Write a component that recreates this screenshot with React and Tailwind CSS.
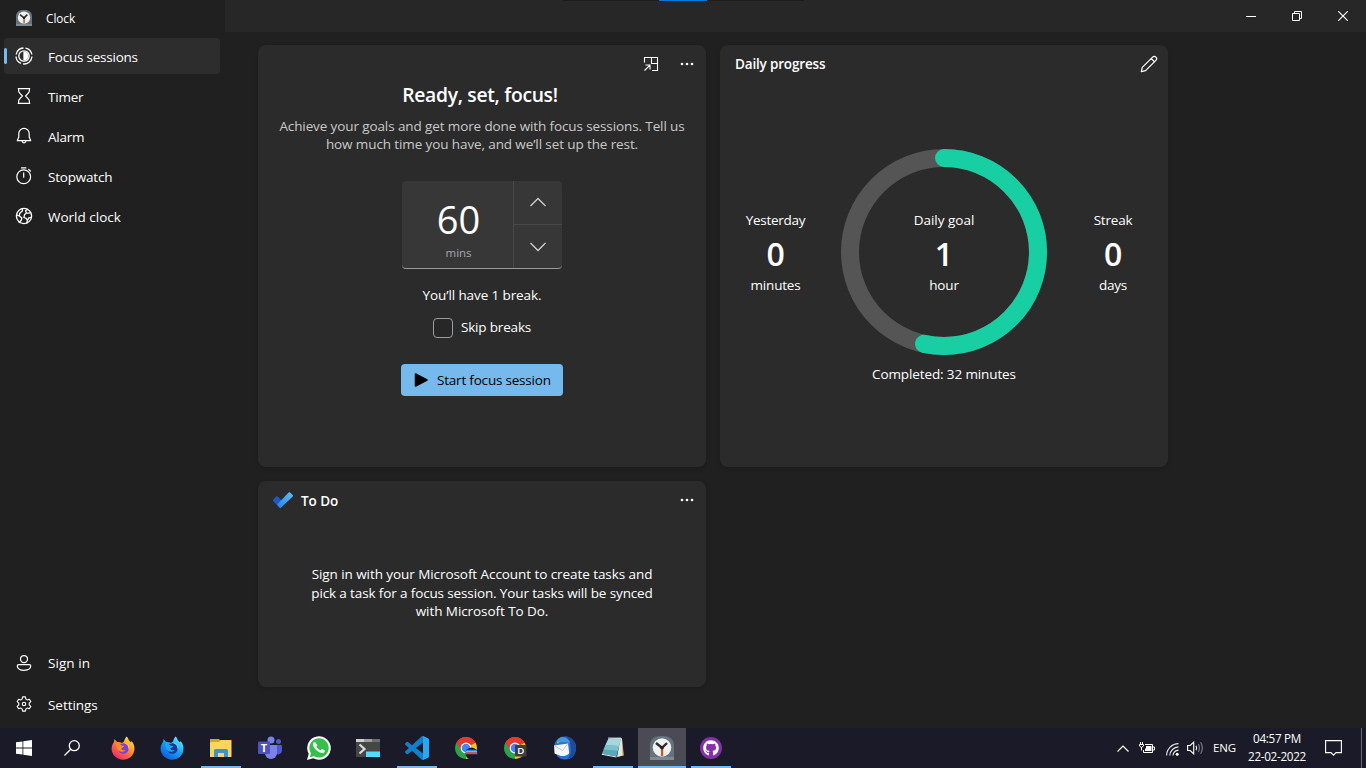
import React from "react";
import { FaGithub } from "react-icons/fa";

const line = {
  fill: "none",
  stroke: "currentColor",
  strokeWidth: 1.1,
  strokeLinecap: "round",
  strokeLinejoin: "round",
};

function ClockAppIcon({ size }) {
  return (
    <svg width={size} height={size} viewBox="0 0 24 24">
      <path d="M0 24V9.500C0 3.500 4.500 0 10 0h4c5.500 0 10 3.500 10 9.500V24z" fill="#66727c" />
      <path d="M0 21h24v3H0z" fill="#7d8a93" />
      <circle cx="12" cy="11.500" r="9.300" fill="#f1f1f1" />
      <path d="M11 12h2.200v8H11z" fill="#e2491c" />
      <path d="M6 7l6 4.800L17 7" fill="none" stroke="#2e2e2e" strokeWidth="2.400" />
      <circle cx="12" cy="11.800" r="1.800" fill="#222" />
    </svg>
  );
}

function FocusIcon() {
  return (
    <svg width="18" height="18" viewBox="0 0 18 18" {...line} strokeWidth="1.300">
      <path d="M10.500 1.150A8 8 0 0 1 16.850 7.500M17 9.500A8 8 0 0 1 8 16.950M6 16.400A8 8 0 0 1 1 9.500M1.150 7.500A8 8 0 0 1 8.500 1" strokeLinecap="butt" />
      <circle cx="9" cy="9" r="5.200" />
      <path d="M9 5.200A3.800 3.800 0 0 1 9 12.800z" fill="currentColor" />
    </svg>
  );
}

function TimerIcon() {
  return (
    <svg width="18" height="18" viewBox="0 0 18 18" {...line} strokeWidth="1.200">
      <path d="M3.300 1.600h11.400M3.300 16.400h11.400M3.600 1.600v2.200c0 1.200.5 1.800 1.300 2.500L7.400 9l-2.500 2.700c-.8.700-1.300 1.300-1.300 2.500v2.200M14.400 1.600v2.200c0 1.200-.5 1.800-1.300 2.500L10.600 9l2.500 2.700c.8.700 1.300 1.300 1.300 2.500v2.200" />
    </svg>
  );
}

function AlarmIcon() {
  return (
    <svg width="18" height="18" viewBox="0 0 18 18" {...line} strokeWidth="1.200">
      <path d="M9 1.300a5.200 5.200 0 0 0-5.200 5.200v3.600L2.300 13.600h13.400l-1.500-3.500V6.500A5.200 5.200 0 0 0 9 1.300z" />
      <path d="M7.100 14c.1 1.200.8 1.900 1.900 1.900s1.800-.7 1.900-1.900" />
    </svg>
  );
}

function StopwatchIcon() {
  return (
    <svg width="18" height="18" viewBox="0 0 18 18" {...line} strokeWidth="1.200">
      <circle cx="8.700" cy="9.700" r="6.900" />
      <path d="M8.700 5.800v4.400M6.500.9h4.400M13.700 2.500l1.700 1.500" />
    </svg>
  );
}

function WorldIcon() {
  return (
    <svg width="18" height="18" viewBox="0 0 18 18" {...line} strokeWidth="1.300">
      <circle cx="9" cy="9" r="7.600" />
      <path d="M7.300 1.700l.2 2.100-2.700 2.400L4.300 9 1.800 8M4.300 9l2.600 2-.7 2.300-2 2.200M12.500 2.500l-2 1.300.9 2.100-1.900 1.900-.6 2.700 2.300.8 1.200 2.200-.6 2.600M11.400 5.900l2.700.2 1.600-.6M12.400 13.500l1.400-2.600 2.500-.6" />
    </svg>
  );
}

function PersonIcon() {
  return (
    <svg width="18" height="18" viewBox="0 0 18 18" {...line} strokeWidth="1.250">
      <circle cx="9" cy="5" r="3.500" />
      <path d="M3.700 10.700h10.600c.8 0 1.400.6 1.400 1.400 0 2.700-2.900 4.200-6.700 4.200s-6.700-1.500-6.700-4.200c0-.8.6-1.400 1.400-1.400z" />
    </svg>
  );
}

function GearIcon() {
  return (
    <svg width="18" height="18" viewBox="0 0 18 18" {...line} strokeWidth="1.100" className="-translate-y-px">
      <path d="M7.600 1.900h2.800l.5 2.200 1.300.8 2.200-.7 1.400 2.400L14.200 8.200v1.600l1.600 1.600-1.400 2.400-2.200-.7-1.300.8-.5 2.200H7.600l-.5-2.200-1.300-.8-2.200.7-1.400-2.400 1.600-1.600V8.200L2.200 6.600l1.400-2.400 2.200.7 1.300-.8z" />
      <circle cx="9" cy="9" r="1.700" />
    </svg>
  );
}

function Dots() {
  return (
    <svg width="14" height="4" viewBox="0 0 14 4" fill="#fff">
      <circle cx="2" cy="2" r="1.350" />
      <circle cx="7" cy="2" r="1.350" />
      <circle cx="12" cy="2" r="1.350" />
    </svg>
  );
}

const navTop = [
  ["Focus sessions", FocusIcon, "tracking-[-0.220px]"],
  ["Timer", TimerIcon, "tracking-[-0.200px]"],
  ["Alarm", AlarmIcon, "tracking-[-0.250px]"],
  ["Stopwatch", StopwatchIcon, "tracking-[-0.200px]"],
  ["World clock", WorldIcon, "tracking-[0px]"],
];
const navBottom = [
  ["Sign in", PersonIcon, "tracking-[0.050px]"],
  ["Settings", GearIcon, "tracking-[-0.050px]"],
];

function NavItem({ label, Icon, active, textClass }) {
  return (
    <div className={"flex h-9 items-center rounded-[4px] text-white " + (active ? "bg-[#2d2d2d]" : "")}>
      <span className={"h-4 w-[3px] rounded-full " + (active ? "bg-[#76b9ed]" : "")} />
      <span className="ml-2 flex w-[18px] justify-center">
        <Icon />
      </span>
      <span className={"ml-[15px] " + textClass}>{label}</span>
    </div>
  );
}

function Sidebar() {
  return (
    <aside className="flex w-[225px] shrink-0 flex-col px-1 pb-[5px]">
      <div className="flex h-[38px] items-center pl-3">
        <span className="flex w-4 -translate-y-px justify-center"><ClockAppIcon size={16} /></span>
        <span className="ml-3.5 text-[11.800px] tracking-[-0.050px] text-white">Clock</span>
      </div>
      <nav className="flex flex-col gap-1 pr-px">
        {navTop.map(([label, Icon, tracking], i) => (
          <NavItem key={label} label={label} Icon={Icon} active={i === 0} textClass={"pt-[3px] " + tracking} />
        ))}
      </nav>
      <nav className="mt-auto flex flex-col gap-1.5">
        {navBottom.map(([label, Icon, tracking]) => (
          <NavItem key={label} label={label} Icon={Icon} textClass={tracking} />
        ))}
      </nav>
    </aside>
  );
}

function TitleBar() {
  return (
    <header className="flex h-8 items-start bg-[#272727]">
      <div className="ml-[338px] flex h-px w-[241px] bg-[#1b1b1b] pl-24">
        <span className="h-px w-12 bg-[#0078d4]" />
      </div>
      <div className="ml-auto flex h-8 text-white">
        <div className="flex w-[46px] items-center justify-center">
          <svg width="10" height="10" viewBox="0 0 10 10"><path d="M0 5h10v1H0z" fill="#fff" /></svg>
        </div>
        <div className="flex w-[46px] items-center justify-center">
          <svg width="10" height="10" viewBox="0 0 10 10" fill="none" stroke="#fff">
            <path d="M.5 2.500h7v7h-7zM2.500 2.500v-2h7v7h-2" />
          </svg>
        </div>
        <div className="flex w-[46px] items-center justify-center">
          <svg width="10" height="10" viewBox="0 0 10 10" fill="none" stroke="#fff" strokeWidth="1.100">
            <path d="M0 0l10 10M10 0L0 10" />
          </svg>
        </div>
      </div>
    </header>
  );
}

function Chevron({ up }) {
  return (
    <svg width="18" height="10" viewBox="0 0 18 10" fill="none" stroke="#cfcfcf" strokeWidth="1.300">
      <path d={up ? "M1.500 9L9 1.500 16.500 9" : "M1.500 1L9 8.500 16.500 1"} />
    </svg>
  );
}

function FocusCard() {
  return (
    <section className="flex flex-col items-center rounded-lg bg-[#2b2b2b] shadow-[0_2px_4px_rgba(0,0,0,0.15)]">
      <div className="flex h-[38px] w-full items-center justify-end gap-[21px] pr-3">
        <svg width="16" height="16" viewBox="0 0 16 16" fill="none" stroke="#fff" strokeWidth="1.100">
          <path d="M1.500 6.500v-5h13v13H9M8.500 1.500v6h6M1.500 14.500l5.200-5.200M2.500 9h4.500v4.500" />
        </svg>
        <Dots />
      </div>
      <h1 className="-ml-1 h-6 text-[19.300px] font-semibold leading-6 tracking-[-0.300px] text-white">Ready, set, focus!</h1>
      <p className="mt-[10px] h-[37px] whitespace-nowrap text-center leading-[18px] tracking-[-0.110px] text-[#c9c9c9]">
        Achieve your goals and get more done with focus sessions. Tell us
        <br />
        how much time you have, and we’ll set up the rest.
      </p>
      <div className="mt-[27px] flex h-[88px] w-40 overflow-hidden rounded-[4px] border-b border-[#9a9a9a] bg-[#373737]">
        <div className="flex w-[111px] flex-col items-center pl-0.5 pt-[17px]">
          <span className="h-[42px] text-[38px] leading-[42px] text-white">60</span>
          <span className="mt-[5px] h-4 text-[11.500px] leading-4 text-[#a8a8a8]">mins</span>
        </div>
        <div className="flex w-[49px] flex-col border-l border-[#484848]">
          <div className="flex h-11 items-center justify-center border-b border-[#484848]"><Chevron up /></div>
          <div className="flex h-11 items-center justify-center pt-0.5"><Chevron /></div>
        </div>
      </div>
      <p className="mt-4 h-5 leading-5 tracking-[-0.100px] text-white">You’ll have 1 break.</p>
      <div className="mt-[13px] flex h-5 items-center gap-2 text-white">
        <span className="h-5 w-5 rounded-[4px] border border-[#9d9d9d] bg-[#272727]" />
        <span className="-mt-0.5 leading-5 tracking-[-0.170px]">Skip breaks</span>
      </div>
      <button className="mt-[26px] flex h-8 w-[162px] items-center rounded-[4px] bg-[#76b9ed] pl-[13px] text-black">
        <svg width="14" height="16" viewBox="0 0 14 16">
          <path d="M1.500 2l11.500 6-11.500 6z" fill="#000" stroke="#000" strokeWidth="1.500" strokeLinejoin="round" />
        </svg>
        <span className="ml-[9px] whitespace-nowrap pt-px tracking-[-0.200px]">Start focus session</span>
      </button>
    </section>
  );
}

function Stat({ top, value, bottom, className }) {
  return (
    <div className={"flex flex-col items-center text-white " + className}>
      <span className="h-5 leading-5">{top}</span>
      <span className="mt-1.5 h-9 text-[32px] font-semibold leading-9">{value}</span>
      <span className="mt-[3px] h-5 leading-5 tracking-[-0.180px]">{bottom}</span>
    </div>
  );
}

function DailyCard() {
  const r = 94;
  const c = 2 * Math.PI * r;
  return (
    <section className="flex flex-col rounded-lg bg-[#2b2b2b] text-white shadow-[0_2px_4px_rgba(0,0,0,0.15)]">
      <div className="flex h-[38px] items-center justify-between pl-[15px] pr-2.5">
        <h2 className="font-semibold tracking-[-0.170px]">Daily progress</h2>
        <svg width="18" height="18" viewBox="0 0 18 18" {...line} strokeWidth="1.200">
          <path d="M1.300 16.700l1-4.300L12.600 2.100a2.300 2.300 0 0 1 3.300 3.300L5.600 15.700zM11.200 3.500l3.300 3.300" />
        </svg>
      </div>
      <div className="mt-[66px] grid h-[206px] grid-cols-[111px_10px_206px_10px_111px] items-center">
        <Stat top="Yesterday" value="0" bottom="minutes" className="tracking-[-0.300px]" />
        <span />
        <div className="grid h-[206px] w-[206px] place-items-center">
          <svg width="206" height="206" viewBox="0 0 206 206" fill="none" strokeWidth="18" className="col-start-1 row-start-1">
            <circle cx="103" cy="103" r={r} stroke="#555555" />
            <circle cx="103" cy="103" r={r} stroke="#18cfa3" strokeLinecap="round" strokeDasharray={`${(c * 32) / 60} ${c}`} transform="rotate(-90 103 103)" />
          </svg>
          <Stat top="Daily goal" value="1" bottom="hour" className="col-start-1 row-start-1 tracking-[0px]" />
        </div>
        <span />
        <Stat top="Streak" value="0" bottom="days" className="pl-px tracking-[-0.200px]" />
      </div>
      <p className="mt-[9px] text-center leading-5 tracking-[-0.120px]">Completed: 32 minutes</p>
    </section>
  );
}

function TodoCard() {
  return (
    <section className="flex flex-col rounded-lg bg-[#2b2b2b] text-white shadow-[0_2px_4px_rgba(0,0,0,0.15)]">
      <div className="flex h-[38px] items-center pl-[15px] pr-3">
        <svg width="20" height="16" viewBox="0 0 20 16">
          <path d="M0 7.800L3.200 4.600q.8-.7 1.600 0L11 11l-3.200 4.700q-.8.500-1.500 0L.4 9.200q-.7-.7-.4-1.400z" fill="#1d59c5" />
          <path d="M4.200 12.400L15.600.6q.8-.7 1.600 0l2.500 2.500q.6.800 0 1.500L8.200 15.600q-.8.700-1.600 0z" fill="url(#todo)" />
          <defs>
            <linearGradient id="todo" x1="5" y1="15" x2="19" y2="1" gradientUnits="userSpaceOnUse">
              <stop stopColor="#2b86e8" /><stop offset="1" stopColor="#5bbcf8" />
            </linearGradient>
          </defs>
        </svg>
        <h2 className="ml-2 pt-[3px] font-semibold">To Do</h2>
        <span className="ml-auto"><Dots /></span>
      </div>
      <p className="mt-[46px] whitespace-nowrap text-center leading-[18.600px] tracking-[-0.070px]">
        Sign in with your Microsoft Account to create tasks and
        <br />
        <span className="tracking-[-0.130px]">pick a task for a focus session. Your tasks will be synced</span>
        <br />
        with Microsoft To Do.
      </p>
    </section>
  );
}

function Firefox({ id, a, b, c, d }) {
  return (
    <svg width="24" height="24" viewBox="0 0 24 24">
      <defs>
        <linearGradient id={id} x1="20" y1="2" x2="5" y2="22" gradientUnits="userSpaceOnUse">
          <stop stopColor={a} /><stop offset=".45" stopColor={b} /><stop offset="1" stopColor={c} />
        </linearGradient>
      </defs>
      <path d="M15.500.5c1.300 1 2 2.500 2.300 3.700l2.200 2.200.7-1.400C23 8 23.700 10.600 23.400 13.400 22.800 19.400 18 23.700 12 23.700S.6 19 .6 12.800C.6 9.500 2 7.300 3 6l.4-3 2.800 3c1.600-.3 3 .1 4.200.8 1-.2 2-.6 2.500-1.400.8-1.300 1-3.300 2.600-4.900z" fill={`url(#${id})`} />
      <circle cx="12.300" cy="12.500" r="5.300" fill={d} />
      <path d="M5 8.500c2-.8 4-.4 5.500 1l2.700.5c-.5 1.600-2 2-3 2.200.2 1.600 2.300 2.700 4.600 1.800-1.700 2.800-7.500 2.600-8.700-2z" fill={b} />
      <path d="M14 7c2.500.8 4 3 3.700 5.500" stroke={a} strokeWidth="1.300" fill="none" opacity=".6" />
    </svg>
  );
}

function Chrome({ children }) {
  return (
    <svg width="24" height="24" viewBox="0 0 24 24">
      <path d="M12 12L2.480 6.500A11 11 0 0 1 21.520 6.500z" fill="#e33b2e" />
      <path d="M12 12L21.520 6.500A11 11 0 0 1 12 23z" fill="#fbc116" />
      <path d="M12 12v11A11 11 0 0 1 2.480 6.500z" fill="#2ba24c" />
      <path d="M2.480 6.500L7 14.500l5-8h9.500A11 11 0 0 0 2.480 6.500z" fill="#e33b2e" />
      <circle cx="12" cy="12" r="5.400" fill="#fff" />
      <circle cx="12" cy="12" r="4.300" fill="#4285f4" />
      {children}
    </svg>
  );
}

const apps = [
  {
    name: "Firefox",
    icon: <Firefox id="ffa" a="#ffe14a" b="#ff8a2a" c="#f8246c" d="#7a3fe0" />,
  },
  {
    name: "Firefox Developer",
    icon: <Firefox id="ffb" a="#5ff0ff" b="#1ea4f4" c="#0a5fe0" d="#23348f" />,
  },
  {
    name: "Explorer",
    open: true,
    icon: (
      <svg width="24" height="24" viewBox="0 0 24 24">
        <path d="M1 3h9l1.500 2H22v16H1z" fill="#e3a011" />
        <path d="M1 6h9l1.500-2H22.500v17H1z" fill="#fcd462" />
        <path d="M5 21v-6.500a1.500 1.500 0 0 1 1.500-1.500h11a1.500 1.500 0 0 1 1.500 1.500V21h-4v-4H9v4z" fill="#3b93d3" />
      </svg>
    ),
  },
  {
    name: "Teams",
    icon: (
      <svg width="24" height="24" viewBox="0 0 24 24">
        <circle cx="20.500" cy="5.500" r="2.500" fill="#5059c9" />
        <circle cx="13" cy="4" r="3.500" fill="#7b83eb" />
        <path d="M17 9h6a1 1 0 0 1 1 1v5a4 4 0 0 1-7 2z" fill="#5059c9" />
        <path d="M7 9h11a1 1 0 0 1 1 1v7a6 6 0 0 1-12 0z" fill="#7b83eb" />
        <rect y="5.500" width="12" height="12.500" rx="1" fill="#4b53bc" />
        <text x="6" y="15.800" textAnchor="middle" fontSize="11" fontWeight="700" fill="#fff">T</text>
      </svg>
    ),
  },
  {
    name: "WhatsApp",
    icon: (
      <svg width="24" height="24" viewBox="0 0 24 24">
        <path d="M0 24l1.700-6.200A11.800 11.800 0 1 1 6.200 22.300z" fill="#fff" />
        <path d="M2.800 21.200l1.100-4A9.700 9.700 0 1 1 7 20.200z" fill="#35c04b" />
        <path d="M8.500 6.600c-.4-.8-1.300-.7-1.900 0-1.700 2 .1 5 2.600 7.400 2.600 2.400 5.500 3.700 7.500 2.700 1-.6 1.300-1.600 1.100-2.200l-2.700-1.400c-.5-.1-1 1.300-1.500 1.300-1.500-.3-3.600-2.200-4.200-3.800 0-.5 1-1 .9-1.500z" fill="#fff" />
      </svg>
    ),
  },
  {
    name: "Terminal",
    icon: (
      <svg width="24" height="24" viewBox="0 0 24 24">
        <path d="M0 3h24v18H0z" fill="#464646" />
        <path d="M0 3h8v3H0z" fill="#cfcfcf" /><path d="M8 3h8v3H8z" fill="#a0a0a0" /><path d="M16 3h8v3h-8z" fill="#6e6e6e" />
        <path d="M3.500 8.500l5 4.500-5 4.500" fill="none" stroke="#dcdcdc" strokeWidth="2.200" />
        <path d="M10 15.500h14V21H10z" fill="#4fdffb" />
      </svg>
    ),
  },
  {
    name: "VS Code",
    open: true,
    icon: (
      <svg width="24" height="24" viewBox="0 0 24 24">
        <path fill="#1080cc" d="M23.150 2.587L18.210.21a1.494 1.494 0 0 0-1.705.29l-9.460 8.630-4.120-3.128a.999.999 0 0 0-1.276.057L.327 7.261A1 1 0 0 0 .326 8.740L3.899 12 .326 15.260a1 1 0 0 0 .001 1.479L1.650 17.940a.999.999 0 0 0 1.276.057l4.120-3.128 9.460 8.630a1.492 1.492 0 0 0 1.704.290l4.942-2.377A1.500 1.500 0 0 0 24 20.060V3.939a1.500 1.500 0 0 0-.850-1.352zm-5.146 14.861L10.826 12l7.178-5.448v10.896z" />
        <path fill="#2aa6f2" d="M18 .1l5.200 2.500a1.500 1.500 0 0 1 .8 1.300v16.200a1.500 1.500 0 0 1-.8 1.300L18 23.900z" />
      </svg>
    ),
  },
  {
    name: "Chrome",
    icon: (
      <Chrome>
        <circle cx="17.500" cy="17.500" r="6" fill="#14163a" />
        <path d="M12 15.200h11v1.300H11.700z" fill="#e8f0f5" />
        <path d="M11.600 16.500h11.800v1.800H11.600z" fill="#e6423a" />
        <path d="M12.800 13.700h9.400l.8 1.500H12z" fill="#2f8ed0" />
      </Chrome>
    ),
  },
  {
    name: "Chrome D",
    icon: (
      <Chrome>
        <rect x="12" y="9" width="11.500" height="11.500" rx="1" fill="#3d3d3d" />
        <text x="17.700" y="18.400" textAnchor="middle" fontSize="9.700" fontWeight="600" fill="#fff">D</text>
      </Chrome>
    ),
  },
  {
    name: "Thunderbird",
    icon: (
      <svg width="24" height="24" viewBox="0 0 24 24">
        <path d="M2.500 8C4 3 9-.3 14.500.5 20 1.500 24 6 24 12c0 7-5 11.500-11 11.500-3 0-6-1-8-3.500z" fill="#2c6fcb" />
        <path d="M14 .5C20 1 24 6 24 12c-.2 6-4 10-8.500 11.200C20 18 20.500 8 14 .5z" fill="#1d4c9c" />
        <path d="M10 .8c4 .6 7 2.500 8.500 6l-5-.8-9 .5C5 3.500 7.500 1.500 10 .8z" fill="#4598e0" />
        <path d="M2 9.500L16 7.500l1.200 9.500c-1.500 2.500-4.700 3.300-8.200 3l-6.500-2.500z" fill="#f6f7fa" />
        <path d="M2 9.500l8.500 5L16 7.500" fill="none" stroke="#b4c0d2" strokeWidth=".9" />
        <circle cx="6" cy="6.600" r="1" fill="#caa14c" />
      </svg>
    ),
  },
  {
    name: "Notepad",
    open: true,
    icon: (
      <svg width="24" height="24" viewBox="0 0 24 24">
        <path d="M20 2l1 1 2 16.500-6 1.300z" fill="#c79a48" />
        <path d="M19.500 2l1.500.5.5 17L16 21z" fill="#dfe6e6" />
        <path d="M7.500 2.500L20 2 15.500 20.500.8 17.800z" fill="#5aa9b8" />
        <path d="M7.500 2.500L20 2l-2 8L4.500 9z" fill="#a8d6dc" />
        <path d="M4.500 9L18 10l-1 4.500L2.500 13.500z" fill="#7dc0cb" />
        <path d="M.8 17.800l14.700 2.700v.9L.8 18.700z" fill="#e6eeee" />
        <path d="M7.500 2h12.500" stroke="#f0f0f0" strokeWidth="1.500" strokeDasharray="1 1" />
      </svg>
    ),
  },
  { name: "Clock", open: true, active: true, icon: <ClockAppIcon size={24} /> },
  {
    name: "GitHub",
    open: true,
    icon: (
      <span className="flex h-[22px] w-[22px] items-center justify-center rounded-full bg-[#8430a8] text-white">
        <FaGithub size={16} />
      </span>
    ),
  },
];

function Taskbar() {
  return (
    <footer className="flex h-10 bg-[#1b1a28] text-white">
      <div className="flex w-12 items-center justify-center">
        <svg width="16" height="16" viewBox="0 0 16 16" fill="#fff">
          <path d="M0 2.300L6.500 1.400V7.500H0zM7.300 1.300L16 0v7.500H7.300zM0 8.500h6.500v6.100L0 13.700zM7.300 8.500H16V16l-8.700-1.300z" />
        </svg>
      </div>
      <div className="mr-[3px] flex w-12 items-center justify-center">
        <svg width="16" height="16" viewBox="0 0 16 16" fill="none" stroke="#fff" strokeWidth="1.300">
          <circle cx="10.300" cy="5.700" r="5" /><path d="M6.700 9.300L.5 15.500" />
        </svg>
      </div>
      <div className="flex gap-px">
        {apps.map((a) => (
          <div key={a.name} className={"flex w-12 flex-col items-center pt-2 " + (a.active ? "bg-[#4b4a55]" : "")}>
            <span className="flex h-6 items-center">{a.icon}</span>
            {a.open && <span className={"mt-auto h-0.5 bg-[#76b9ed] " + (a.active ? "w-12" : "w-10")} />}
          </div>
        ))}
      </div>
      <div className="ml-auto flex items-center">
        <svg width="12" height="7" viewBox="0 0 12 7" fill="none" stroke="#fff" strokeWidth="1.200"><path d="M.5 6.500L6 1l5.500 5.500" /></svg>
        <svg className="ml-2.5" width="16" height="12" viewBox="0 0 16 12" fill="none" stroke="#fff">
          <path d="M6 2.500h7.500v8h-9V8M14 5h1.500v3H14" />
          <path d="M7 4h5.500v5H6V6.500h1z" fill="#fff" stroke="none" />
          <path d="M1.500 0v2M3.500 0v2M.5 2.500h4V4l-2 1.500L.5 4zM2.500 5v3.500" />
        </svg>
        <svg className="ml-[11px] mt-0.5" width="13" height="13" viewBox="0 0 13 13" fill="none" stroke="#e8e8e8" strokeWidth="1.100">
          <path d="M.6 12.500A12 12 0 0 1 12.500.6M3.800 12.500a9 9 0 0 1 8.700-8.600M7 12.500a6 6 0 0 1 5.500-5.400" />
          <circle cx="11.200" cy="11.300" r="1.500" fill="#fff" stroke="none" />
        </svg>
        <svg className="ml-2" width="17" height="14" viewBox="0 0 17 14" fill="none" stroke="#fff" strokeWidth="1.100">
          <path d="M.6 4.500h2.600l3.500-3.400v11.800L3.200 9.500H.6z" />
          <path d="M9 4.700q1.300 2.300 0 4.600" />
          <path d="M11.300 3q2.300 4 0 8M13.600 1.300q3.500 5.700 0 11.400" opacity=".45" />
        </svg>
        <span className="ml-[9px] w-[24px] whitespace-nowrap text-[11.500px] tracking-[-0.200px]">ENG</span>
        <div className="ml-[9px] flex w-[62px] flex-col items-center whitespace-nowrap pb-0.5 text-[11.700px] leading-[18px] tracking-[-0.300px]">
          <span>04:57 PM</span>
          <span>22-02-2022</span>
        </div>
        <svg className="ml-[17px] mr-[19px]" width="17" height="16" viewBox="0 0 17 16" fill="none" stroke="#fff" strokeWidth="1.100">
          <path d="M.6.600h15.800v12H11L8.500 15.200 6 12.600H.6z" />
        </svg>
        <span className="mr-[4px] h-10 w-px bg-[#6a6973]" />
      </div>
    </footer>
  );
}

export default function App() {
  return (
    <div className="flex h-[768px] w-[1366px] flex-col overflow-hidden bg-[#202020] font-['Open_Sans','Noto_Sans',sans-serif] text-[13.500px] tracking-[-0.050px]">
      <div className="flex h-[728px]">
        <Sidebar />
        <div className="flex flex-1 flex-col">
          <TitleBar />
          <main className="grid grid-cols-[448px_448px] grid-rows-[422px_206px] gap-3.5 pl-[33px] pt-[13px]">
            <FocusCard />
            <DailyCard />
            <TodoCard />
          </main>
        </div>
      </div>
      <Taskbar />
    </div>
  );
}
